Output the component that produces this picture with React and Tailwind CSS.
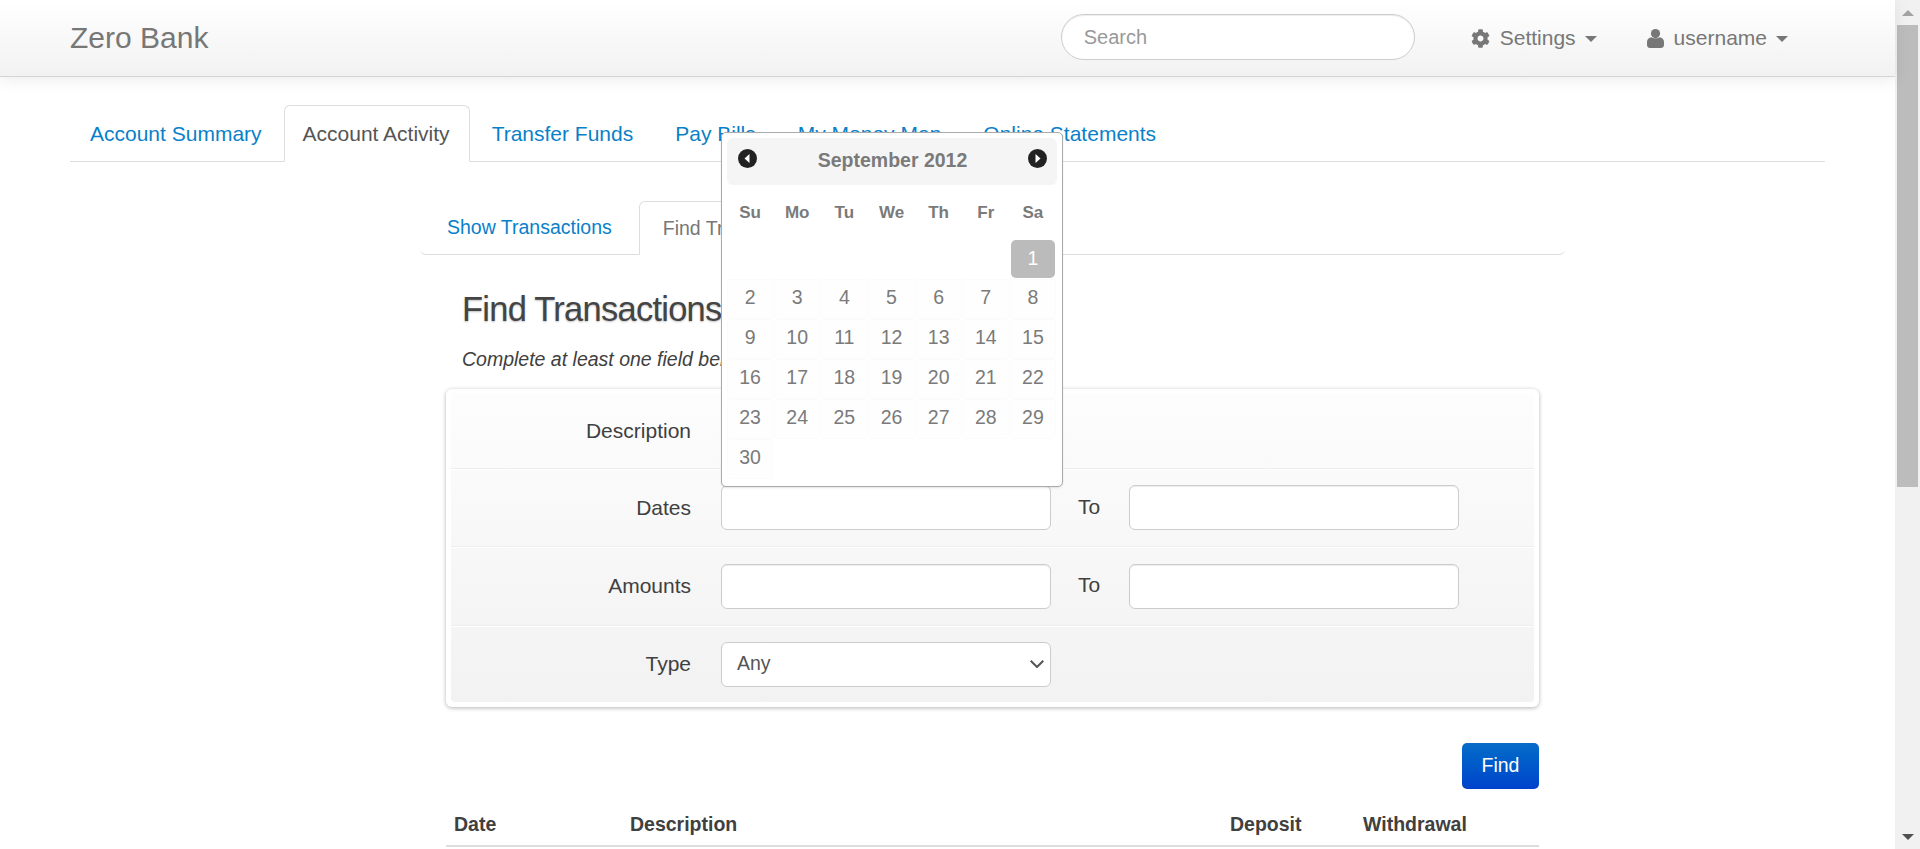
import { FaCog } from 'react-icons/fa';

const weeks = [
  [null, null, null, null, null, null, 1],
  [2, 3, 4, 5, 6, 7, 8],
  [9, 10, 11, 12, 13, 14, 15],
  [16, 17, 18, 19, 20, 21, 22],
  [23, 24, 25, 26, 27, 28, 29],
  [30, null, null, null, null, null, null],
];

function Caret() {
  return <span className="ml-[9px] mt-[1px] w-0 h-0 border-x-[6px] border-x-transparent border-t-[6px] border-t-[#777]" />;
}

function NavArrow({ flip }) {
  return (
    <svg width="19" height="19" viewBox="0 0 19 19" className={flip ? 'rotate-180' : ''}>
      <circle cx="9.5" cy="9.5" r="9.5" fill="#222" />
      <path d="M11.5 5 L6.5 9.5 L11.5 14 Z" fill="#fff" />
    </svg>
  );
}

function UserIcon() {
  return (
    <svg width="17" height="19" viewBox="0 0 17 19" className="mr-[10px]" fill="#777">
      <circle cx="8.5" cy="4.6" r="4.6" />
      <path d="M0 13 C0 10 2 8.5 4.5 8.2 C6 9.6 11 9.6 12.5 8.2 C15 8.5 17 10 17 13 L17 16 C17 18 15.500 19 14 19 L3 19 C1.500 19 0 18 0 16 Z" />
    </svg>
  );
}

function Datepicker() {
  return (
    <div className="absolute left-[721px] top-[132px] w-[342px] h-[355px] z-10 bg-white border border-[#aaa] rounded-[5px] p-[5px] shadow-[0_1px_2px_rgba(0,0,0,0.1)]">
      <div className="h-[47px] bg-[#f5f5f5] rounded-[6px] flex items-center justify-between pl-[11px] pr-[10px] pb-[6px]">
        <NavArrow />
        <span className="text-[19.5px] font-bold text-[#7a7a7a] mt-[5px]">September 2012</span>
        <NavArrow flip />
      </div>
      <div className="grid grid-cols-7 gap-x-[3px] pl-[1px] pr-[2px] h-[55px] items-center text-center text-[17px] font-bold text-[#7a7a7a]">
        {['Su', 'Mo', 'Tu', 'We', 'Th', 'Fr', 'Sa'].map((d) => (
          <span key={d}>{d}</span>
        ))}
      </div>
      <div className="grid grid-cols-7 gap-x-[3px] gap-y-[2px] pl-[1px] pr-[2px]">
        {weeks.flat().map((d, i) =>
          d === null ? (
            <span key={i} className="h-[38px]" />
          ) : (
            <span
              key={i}
              className={
                d === 1
                  ? 'h-[38px] rounded-[5px] bg-[#bbb] text-white text-[19.5px] flex items-center justify-center'
                  : 'h-[38px] bg-[#fefefe] shadow-[0_0_2px_rgba(0,0,0,0.05)] text-[#7a7a7a] text-[19.5px] pb-[2px] flex items-center justify-center'
              }
            >
              {d}
            </span>
          )
        )}
      </div>
    </div>
  );
}

function Field({ label, rowClass, children }) {
  return (
    <div className={`flex items-center ${rowClass}`}>
      <label className="w-[240px] text-right text-[21px] text-[#404040] shrink-0">{label}</label>
      <div className="ml-[30px] flex items-center">{children}</div>
    </div>
  );
}

function TextBox() {
  return <input className="w-[330px] h-[45px] bg-white border border-[#ccc] rounded-[6px] shadow-[inset_0_1px_1px_rgba(0,0,0,0.075)]" />;
}

function ToLabel() {
  return <span className="ml-[27px] mb-[2px] w-[51px] text-[21px] text-[#404040]">To</span>;
}

export default function App() {
  return (
    <div className="relative flex h-screen overflow-hidden bg-white font-['Liberation_Sans',Arial,sans-serif] text-[#333]">
      <div className="relative flex-1 min-w-0">
        <header className="h-[77px] flex items-center pl-[70px] bg-gradient-to-b from-white to-[#f2f2f2] border-b border-b-[#d4d4d4] shadow-[0_3px_15px_rgba(0,0,0,0.08)]">
          <span className="mb-[2px] text-[30px] text-[#777]">Zero Bank</span>
          <input
            placeholder="Search"
            className="ml-auto mb-[2px] w-[354px] h-[46px] px-[22px] bg-white border border-[#ccc] rounded-full text-[20px] placeholder:text-[#999] shadow-[inset_0_1px_1px_rgba(0,0,0,0.075)]"
          />
          <div className="ml-[56px] flex items-center text-[21px] text-[#777]">
            <FaCog className="w-[19px] h-[19px] mr-[10px]" />
            Settings
            <Caret />
          </div>
          <div className="ml-[50px] mr-[107px] flex items-center text-[21px] text-[#777]">
            <UserIcon />
            username
            <Caret />
          </div>
        </header>

        <nav className="mx-[70px] mt-[28px] h-[57px] flex items-end border-b border-b-[#ddd] text-[21px] text-[#0a7fc9]">
          <a className="px-[20px] pb-[12px]">Account Summary</a>
          <a className="ml-[2px] h-[57px] pl-[18px] pr-[19px] pt-[12px] -mb-px bg-white border border-[#ddd] border-b-white rounded-t-[6px] text-[#555]">Account Activity</a>
          <a className="ml-[1px] px-[21px] pb-[12px]">Transfer Funds</a>
          <a className="px-[21px] pb-[12px]">Pay Bills</a>
          <a className="px-[21px] pb-[12px]">My Money Map</a>
          <a className="px-[21px] pb-[12px]">Online Statements</a>
        </nav>

        <div className="ml-[420px] w-[1145px] mt-[39px]">
          <div className="h-[54px] flex items-end border-b border-b-[#ddd] rounded-b-[6px] text-[19.5px] text-[#0a7fc9]">
            <a className="ml-[27px] pb-[12px]">Show Transactions</a>
            <a className="ml-[27px] h-[54px] px-[23px] pt-[12px] -mb-px whitespace-nowrap bg-white border border-[#ddd] border-b-white rounded-t-[6px] text-[#777]">Find Transactions</a>
          </div>

          <h2 className="ml-[42px] mt-[31px] text-[34.5px] leading-[46px] tracking-[-0.75px] text-[#444] [text-shadow:0_1px_2px_rgba(0,0,0,0.25)]">Find Transactions</h2>
          <p className="ml-[42px] mt-[13px] text-[19.5px] leading-[28px] italic text-[#404040]">Complete at least one field below.</p>

          <div className="ml-[26px] w-[1093px] mt-[16px] h-[318px] px-[5px] pt-[4px] pb-[5px] bg-white rounded-[6px] shadow-[0_1px_4px_rgba(0,0,0,0.3)]">
            <div className="h-full rounded-[4px] bg-gradient-to-b from-[#fdfdfd] to-[#f2f2f2]">
              <Field label="Description" rowClass="h-[76px] border-b border-b-[#eee] shadow-[0_1px_0_#fff]">
                <TextBox />
              </Field>
              <Field label="Dates" rowClass="h-[78px] border-b border-b-[#eee] shadow-[0_1px_0_#fff]">
                <TextBox />
                <ToLabel />
                <TextBox />
              </Field>
              <Field label="Amounts" rowClass="h-[79px] border-b border-b-[#eee] shadow-[0_1px_0_#fff]">
                <TextBox />
                <ToLabel />
                <TextBox />
              </Field>
              <Field label="Type" rowClass="h-[76px]">
                <div className="relative">
                  <select className="block w-[330px] h-[45px] pl-[15px] appearance-none bg-white border border-[#ccc] rounded-[6px] text-[19.5px] text-[#555]">
                    <option>Any</option>
                  </select>
                  <svg width="14" height="8" viewBox="0 0 14 8" fill="none" stroke="#555" strokeWidth="2" className="absolute right-[7px] top-[18px] pointer-events-none">
                    <path d="M0.700 0.700 L7 7 L13.300 0.700" />
                  </svg>
                </div>
              </Field>
            </div>
          </div>

          <div className="ml-[26px] w-[1093px] mt-[36px] flex justify-end">
            <button className="w-[77px] h-[46px] rounded-[5px] bg-gradient-to-b from-[#0a6cc8] to-[#0042cc] text-white text-[19.5px]">Find</button>
          </div>

          <div className="ml-[26px] w-[1093px] mt-[21px] h-[37px] flex border-b-2 border-b-[#ddd] text-[19.5px] font-bold text-[#404040]">
            <span className="ml-[8px] w-[176px]">Date</span>
            <span className="w-[600px]">Description</span>
            <span className="w-[133px]">Deposit</span>
            <span>Withdrawal</span>
          </div>
        </div>

        <Datepicker />
      </div>

      <div className="w-[25px] shrink-0 flex flex-col items-center bg-[#f1f1f1]">
        <div className="h-[25px] flex items-center justify-center">
          <span className="w-0 h-0 border-x-[6px] border-x-transparent border-b-[6px] border-b-[#a3a3a3]" />
        </div>
        <div className="w-[21px] h-[462px] bg-[#bcbcbc]" />
        <div className="mt-auto h-[25px] flex items-center justify-center">
          <span className="w-0 h-0 border-x-[6px] border-x-transparent border-t-[6px] border-t-[#505050]" />
        </div>
      </div>
    </div>
  );
}
